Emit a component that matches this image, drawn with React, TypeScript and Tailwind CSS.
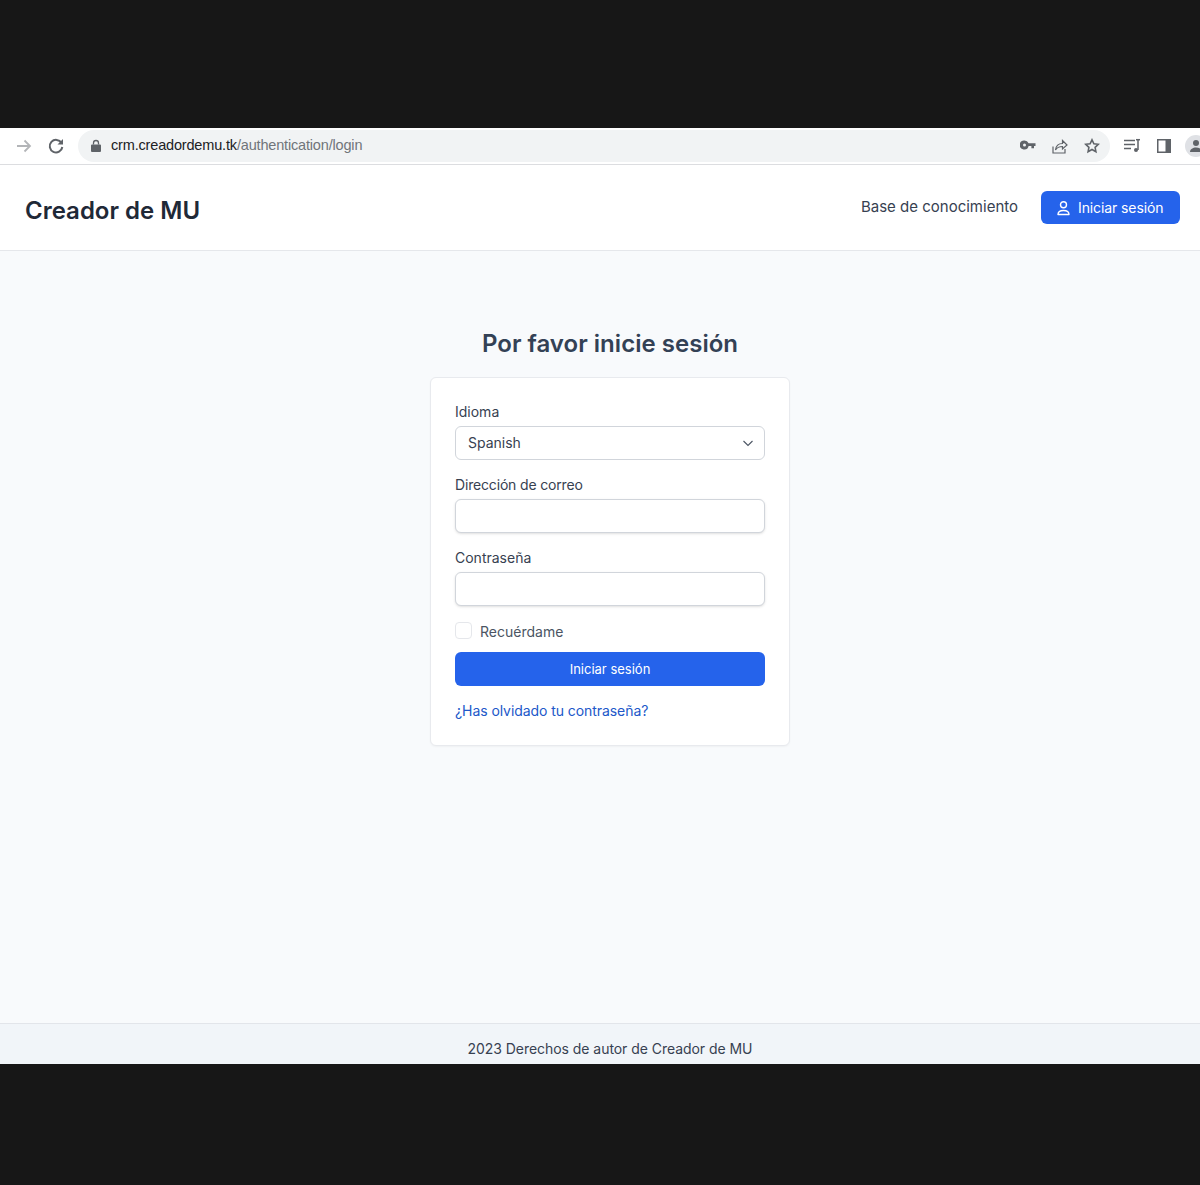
import React from "react";

const inter = "font-['Inter',sans-serif]";

function Field({ label, labelClass = "", children }: { label: string; labelClass?: string; children: React.ReactNode }) {
  return (
    <div className="mb-[15px]">
      <div className={`mb-[4px] h-[20px] text-[14px] leading-[20px] text-[#374151] ${labelClass}`}>{label}</div>
      {children}
    </div>
  );
}

export default function App() {
  return (
    <div className={`flex h-[1185px] w-[1200px] flex-col overflow-hidden bg-[#171717] ${inter}`}>
      <div className="h-[128px] shrink-0 bg-[#171717]" />

      {/* Browser toolbar */}
      <div className="flex h-[37px] shrink-0 items-center overflow-hidden border-b border-[#dcdde0] bg-white font-['Liberation_Sans',sans-serif]">
        <svg className="ml-[15px] h-[18px] w-[18px] shrink-0" viewBox="0 0 18 18" fill="none" stroke="#b3b5b8" strokeWidth="1.8">
          <path d="M2 9h13M9.500 3.500 15 9l-5.500 5.500" />
        </svg>
        <svg className="ml-[14px] h-[18px] w-[18px] shrink-0" viewBox="0 0 18 18" fill="none" stroke="#5f6368" strokeWidth="2">
          <path d="M14.500 6A6.300 6.300 0 1 0 15.300 10" />
          <path d="M16 2v5.500h-5.500z" fill="#5f6368" stroke="none" />
        </svg>
        <div className="ml-[13px] flex h-[32px] w-[1032px] shrink-0 items-center rounded-full bg-[#f1f3f4]">
          <svg className="ml-[12px] h-[14px] w-[12px] shrink-0" viewBox="0 0 12 14" fill="#5f6368">
            <path d="M2 5.500h8a1 1 0 0 1 1 1V12a1 1 0 0 1-1 1H2a1 1 0 0 1-1-1V6.500a1 1 0 0 1 1-1Z" />
            <path d="M3.500 5.500V4a2.500 2.500 0 0 1 5 0v1.500" fill="none" stroke="#5f6368" strokeWidth="1.300" />
          </svg>
          <div className="ml-[9px] text-[14.5px] tracking-[-0.17px] text-[#202124]">
            crm.creadordemu.tk<span className="text-[#70757a]">/authentication/login</span>
          </div>
          <svg className="mt-[-2px] ml-auto h-[16px] w-[16px] shrink-0" viewBox="0 0 16 16" fill="#5f6368">
            <path d="M4.500 3.500a4.500 4.500 0 0 1 4.100 2.700H15.500V9h-1.500v2.200h-2.600V9H8.600A4.500 4.500 0 1 1 4.500 3.500Zm0 3a1.500 1.500 0 1 0 0 3 1.500 1.500 0 0 0 0-3Z" />
          </svg>
          <svg className="mt-[-1px] ml-[16px] h-[16px] w-[16px] shrink-0" viewBox="0 0 16 16" fill="none" stroke="#5f6368" strokeWidth="1.200">
            <path d="M1 8.500V15h12v-4" />
            <path d="M3.500 12c.5-4 3-6.500 7-6.500V2.500L15 7l-4.500 4V8.500c-3 0-5.500 1-7 3.500Z" />
          </svg>
          <svg className="mt-[-1px] ml-[16px] h-[16px] w-[16px] shrink-0" viewBox="0 0 16 16" fill="none" stroke="#5f6368" strokeWidth="1.600">
            <path d="m8 1.800 1.900 4 4.400.5-3.200 3 .8 4.400L8 11.500l-3.900 2.200.8-4.400-3.200-3 4.400-.5Z" />
          </svg>
          <div className="w-[10px] shrink-0" />
        </div>
        <svg className="ml-[13px] h-[16px] w-[18px] shrink-0" viewBox="0 0 18 16" fill="none" stroke="#5f6368" strokeWidth="1.500">
          <path d="M1 2.500h11M1 6.500h11M1 10.500h7M15 2v10" />
          <path d="M13 1.700h4" />
          <circle cx="13" cy="12" r="2" fill="#5f6368" stroke="none" />
        </svg>
        <svg className="ml-[16px] h-[14px] w-[14px] shrink-0" viewBox="0 0 14 14">
          <path d="M0 0h14v14H0Z" fill="#5f6368" />
          <path d="M1.500 1.500h7v11h-7Z" fill="#fff" />
        </svg>
        <div className="ml-[14px] flex h-[22px] w-[22px] shrink-0 items-center justify-center overflow-hidden rounded-full bg-[#dfe1e5]">
          <svg className="h-[14px] w-[14px]" viewBox="0 0 14 14" fill="#5f6368">
            <circle cx="7" cy="4" r="3" />
            <path d="M1 13c0-3 3-4.500 6-4.500s6 1.500 6 4.500Z" />
          </svg>
        </div>
      </div>

      {/* Site header */}
      <header className="flex h-[86px] shrink-0 items-start border-b border-[#e5e7eb] bg-white pr-[20px] pl-[25px]">
        <div className="mt-[28px] text-[24px] leading-[36px] font-semibold text-[#1f2937]">Creador de MU</div>
        <div className="mt-[32px] ml-auto text-[15px] leading-[20px] text-[#374151]">Base de conocimiento</div>
        <button className="mt-[26px] ml-[23px] flex h-[33px] w-[139px] items-center gap-[6px] rounded-[6px] bg-[#2563eb] pl-[15px] text-[14px] tracking-[-0.1px] text-white">
          <svg className="h-[16px] w-[16px]" viewBox="0 0 16 16" fill="none" stroke="currentColor" strokeWidth="1.400">
            <circle cx="7.500" cy="4.700" r="3" />
            <path d="M2 14.500c0-3 2-4 5.500-4s5.500 1 5.500 4Z" strokeLinejoin="round" />
          </svg>
          Iniciar sesión
        </button>
      </header>

      {/* Main */}
      <main className="flex h-[772px] shrink-0 flex-col items-center bg-[#f8fafc] pt-[77px] pl-[20px]">
        <h1 className="h-[32px] text-[24px] leading-[32px] font-semibold tracking-[0.03px] text-[#334155]">Por favor inicie sesión</h1>
        <div className="mt-[17px] h-[369px] w-[360px] rounded-[6px] border border-[#e8eaee] bg-white px-[24px] pt-[24px] shadow-[0_1px_2px_rgba(0,0,0,0.04)]">
          <Field label="Idioma">
            <div className="flex h-[34px] items-center justify-between rounded-[6px] border border-[#d1d5db] bg-white pr-[10px] pl-[12px] text-[14px] text-[#374151]">
              <span className="mt-[-1px]">Spanish</span>
              <svg className="h-[12px] w-[12px]" viewBox="0 0 12 12" fill="none" stroke="#4b5563" strokeWidth="1.100">
                <path d="m1.500 4 4.500 4.500L10.500 4" />
              </svg>
            </div>
          </Field>
          <Field label="Dirección de correo" labelClass="tracking-[-0.17px]">
            <input type="text" className="block h-[34px] w-full rounded-[6px] border border-[#d1d5db] bg-white shadow-sm" />
          </Field>
          <Field label="Contraseña">
            <input type="password" className="block h-[34px] w-full rounded-[6px] border border-[#d1d5db] bg-white shadow-sm" />
          </Field>
          <div className="flex h-[32px] items-start">
            <div className="mt-[1px] h-[17px] w-[17px] rounded-[4px] border border-[#e5e7eb] bg-white" />
            <span className="mt-[1px] ml-[8px] text-[14px] leading-[20px] text-[#4b5563]">Recuérdame</span>
          </div>
          <button className="mt-[-1px] block h-[34px] w-full rounded-[6px] bg-[#2563eb] pt-[1px] text-[13px] text-white">Iniciar sesión</button>
          <div className="mt-[15px] text-[14px] leading-[20px] tracking-[-0.07px] text-[#2158c9]">¿Has olvidado tu contraseña?</div>
        </div>
      </main>

      {/* Footer */}
      <footer className="h-[41px] shrink-0 border-t border-[#e2e5ea] bg-[#f1f5f9] pt-[15px] pl-[20px] text-center text-[14px] leading-[20px] tracking-[-0.05px] text-[#374151]">
        2023 Derechos de autor de Creador de MU
      </footer>
    </div>
  );
}
